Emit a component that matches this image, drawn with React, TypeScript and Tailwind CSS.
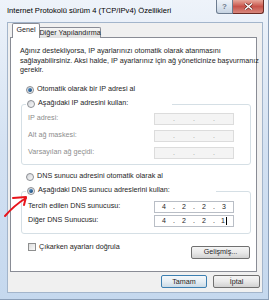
import React from "react";

function Radio({ checked }: { checked?: boolean }) {
  return (
    <span className="w-[8px] h-[8px] rounded-full border border-[#8b8e93] bg-gradient-to-br from-[#d2d4d8] to-[#fbfbfb] flex items-center justify-center shrink-0">
      {checked && <span className="w-[4px] h-[4px] rounded-full bg-gradient-to-br from-[#5a9bd5] to-[#123f6c]" />}
    </span>
  );
}

function IpField({ values, disabled, cursor }: { values?: string[]; disabled?: boolean; cursor?: boolean }) {
  const v = values ?? ["", "", "", ""];
  return (
    <div
      className={`w-[80px] h-[12px] border flex items-center text-[7px] leading-none shrink-0 ${
        disabled ? "bg-[#f4f4f4] border-[#dcdcdc] text-[#9a9a9a]" : "bg-white border-[#b9bec6] text-[#1e1e1e]"
      }`}
    >
      {v.map((x, i) => (
        <React.Fragment key={i}>
          {i > 0 && <span className="w-[2px] flex justify-center">.</span>}
          <span className="flex-1 flex justify-center items-center">
            {x}
            {cursor && i === 3 && <span className="w-[1px] h-[8px] bg-black ml-[1px]" />}
          </span>
        </React.Fragment>
      ))}
    </div>
  );
}

function Btn({ children, w, def }: { children: React.ReactNode; w: string; def?: boolean }) {
  return (
    <div
      className={`${w} h-[13px] rounded-[2px] border flex items-center justify-center text-[7.2px] leading-none text-[#1e1e1e] ${
        def
          ? "border-[#3c7fb1] bg-gradient-to-b from-[#f4f8fb] via-[#e6eef4] to-[#ccdbe6]"
          : "border-[#707070] bg-gradient-to-b from-[#f5f5f5] via-[#e9e9e9] to-[#d2d2d2]"
      }`}
    >
      {children}
    </div>
  );
}

export default function App() {
  return (
    <div className="w-[269px] h-[300px] relative overflow-hidden font-['Liberation_Sans',Arial,sans-serif] text-[7.2px] text-[#1e1e1e] bg-gradient-to-b from-[#eef3fa] via-[#d3e1f2] to-[#c5d8ee] flex flex-col border-r border-b border-[#8b9fb8]">
      {/* title bar */}
      <div className="h-[22px] flex items-start shrink-0">
        <div className="pl-[7px] pt-[6px] text-[7.6px] leading-[9px] text-black flex-1 whitespace-nowrap">
          Internet Protokolü sürüm 4 (TCP/IPv4) Özellikleri
        </div>
        <div className="flex mr-[4px] shadow-[0_0_1px_#ffffff]">
          <div className="w-[17px] h-[14px] border border-t-0 border-[#6c7c90] rounded-bl-[3px] bg-gradient-to-b from-[#eef3f9] via-[#dce5ef] to-[#c6d3e2] flex items-center justify-center text-[8px] font-bold text-[#6e7b8a] leading-none">
            ?
          </div>
          <div className="w-[31px] h-[14px] border border-t-0 border-l-0 border-[#6b2b25] rounded-br-[3px] bg-gradient-to-b from-[#e6a79b] via-[#c7524a] to-[#d7877d] flex items-center justify-center">
            <svg width="9" height="7" viewBox="0 0 9 7">
              <path d="M1 0.5 L8 6.5 M8 0.5 L1 6.5" stroke="#5b1c16" strokeWidth="2.6" />
              <path d="M1 0.5 L8 6.5 M8 0.5 L1 6.5" stroke="#ffffff" strokeWidth="1.5" />
            </svg>
          </div>
        </div>
      </div>

      {/* client area */}
      <div className="ml-[7px] w-[256px] h-[271px] bg-[#f0f0f0] border border-[#a3b5cb] flex flex-col">
        {/* tabs */}
        <div className="h-[15px] flex items-end pl-[4px] relative z-10 shrink-0 whitespace-nowrap">
          <div className="w-[28px] h-[15px] bg-white border border-b-0 border-[#898c95] rounded-t-[2px] flex items-center justify-center pb-[1px]">
            Genel
          </div>
          <div className="w-[61px] h-[11px] bg-gradient-to-b from-[#f6f6f6] to-[#e0e0e0] border border-l-0 border-b-0 border-[#898c95] rounded-tr-[2px] flex items-center justify-center">
            Diğer Yapılandırma
          </div>
        </div>

        {/* panel */}
        <div className="ml-[2px] w-[247px] h-[235px] -mt-[1px] bg-white border border-[#898c95] flex flex-col shrink-0 whitespace-nowrap">
          <div className="pl-[9px] pt-[8px] leading-[9.5px]">
            Ağınız destekliyorsa, IP ayarlarınızı otomatik olarak atanmasını
            <br />
            sağlayabilirsiniz. Aksi halde, IP ayarlarınız için ağ yöneticinize başvurmanız
            <br />
            gerekir.
          </div>

          <div className="mt-[10px] h-[10px] pl-[15px] flex items-center gap-[3px]">
            <Radio checked />
            <span>Otomatik olarak bir IP adresi al</span>
          </div>

          {/* IP group */}
          <div className="mt-[9px] ml-[10px] w-[230px] border border-[#d5dfe5] rounded-[3px] flex flex-col pb-[5px]">
            <div className="-mt-[6px] ml-[4px] h-[10px] w-[146px] bg-white px-[1px] flex items-center gap-[3px]">
              <Radio />
              <span>Aşağıdaki IP adresini kullan:</span>
            </div>
            <div className="mt-[4px] flex flex-col gap-[5px] pl-[6px] text-[#8d8d8d]">
              <div className="flex items-center h-[12px]">
                <span className="w-[126px]">IP adresi:</span>
                <IpField disabled />
              </div>
              <div className="flex items-center h-[12px]">
                <span className="w-[126px]">Alt ağ maskesi:</span>
                <IpField disabled />
              </div>
              <div className="flex items-center h-[12px]">
                <span className="w-[126px]">Varsayılan ağ geçidi:</span>
                <IpField disabled />
              </div>
            </div>
          </div>

          <div className="mt-[7px] h-[10px] pl-[15px] flex items-center gap-[3px]">
            <Radio />
            <span>DNS sunucu adresini otomatik olarak al</span>
          </div>

          {/* DNS group */}
          <div className="mt-[9px] ml-[10px] w-[230px] border border-[#d5dfe5] rounded-[3px] flex flex-col pb-[6px]">
            <div className="-mt-[6px] ml-[4px] h-[10px] w-[190px] bg-white px-[1px] flex items-center gap-[3px]">
              <Radio checked />
              <span>Aşağıdaki DNS sunucu adreslerini kullan:</span>
            </div>
            <div className="mt-[5px] flex flex-col gap-[2px] pl-[6px]">
              <div className="flex items-center h-[12px]">
                <span className="w-[126px]">Tercih edilen DNS sunucusu:</span>
                <IpField values={["4", "2", "2", "3"]} />
              </div>
              <div className="flex items-center h-[12px]">
                <span className="w-[126px]">Diğer DNS Sunucusu:</span>
                <IpField values={["4", "2", "2", "1"]} cursor />
              </div>
            </div>
          </div>

          <div className="mt-[9px] flex items-start justify-between pl-[17px] pr-[6px]">
            <div className="flex items-center gap-[3px] h-[9px]">
              <span className="w-[8px] h-[8px] border border-[#8e8f8f] bg-gradient-to-br from-[#dcdcdc] to-[#fafafa]" />
              <span>Çıkarken ayarları doğrula</span>
            </div>
            <div className="mt-[3px]">
              <Btn w="w-[59px]">Gelişmiş...</Btn>
            </div>
          </div>
        </div>

        {/* buttons */}
        <div className="mt-[3px] flex justify-end gap-[6px] pr-[2px]">
          <Btn w="w-[46px]" def>
            Tamam
          </Btn>
          <Btn w="w-[47px]">İptal</Btn>
        </div>
      </div>

      {/* annotation arrow */}
      <svg className="absolute left-[2px] top-[193px]" width="30" height="26" viewBox="0 0 30 26">
        <path d="M3 23 C 9 16, 16 10, 24 5" stroke="#e8141b" strokeWidth="2" fill="none" strokeLinecap="round" />
        <path d="M11 5 L 24 4 L 22 12" stroke="#e8141b" strokeWidth="2" fill="none" strokeLinecap="round" strokeLinejoin="round" />
      </svg>
    </div>
  );
}
